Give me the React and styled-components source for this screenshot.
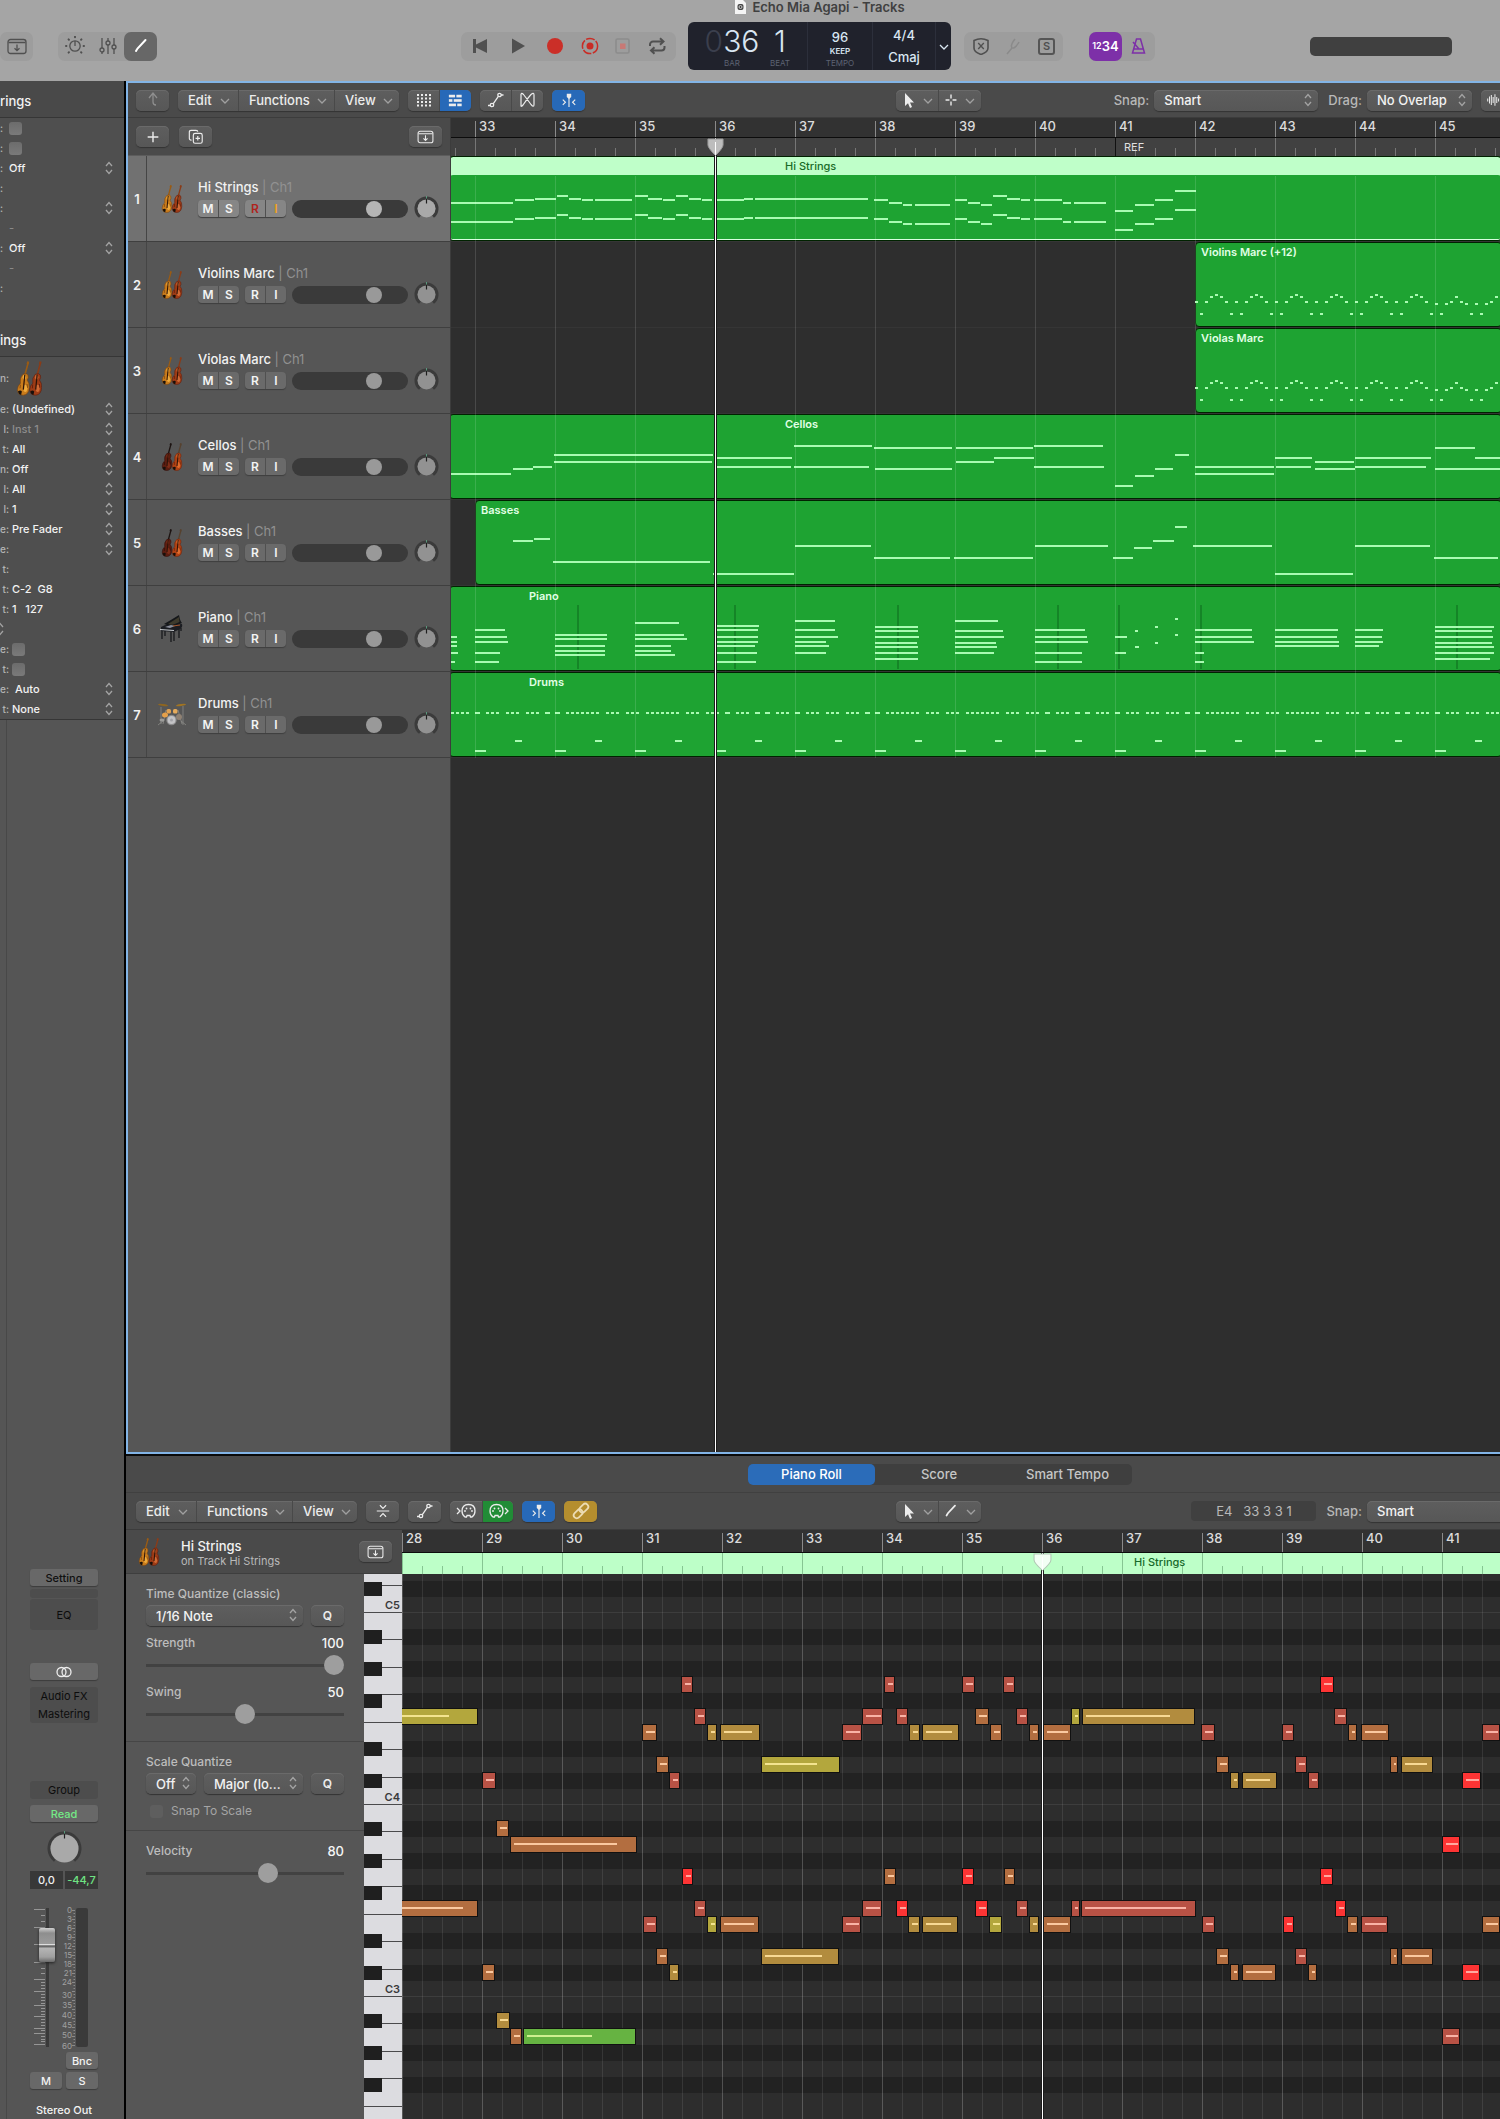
import React from 'react';
import styled, { createGlobalStyle, css } from 'styled-components';

const GlobalStyle = createGlobalStyle`
  * { box-sizing: border-box; }
  body {
    margin: 0;
    background: #4a4a4a;
    color: #f2f2f2;
    font-family: Inter, "Liberation Sans", sans-serif;
    font-size: 12px;
    line-height: 16px;
    overflow-x: hidden;
  }
  button, select, input { font: inherit; color: inherit; margin: 0; }
`;

/* ---------- data ---------- */

const BAR = 80;

const hiStringsLine = [
  [0, 62, 46], [64, 83, 43], [84, 105, 42], [106, 117, 39], [118, 130, 42], [131, 142, 43], [144, 181, 43],
  [184, 197, 39], [197, 211, 42], [212, 224, 43], [225, 237, 39], [238, 250, 42], [251, 261, 43],
  [265, 293, 43], [293, 302, 42], [304, 417, 42], [423, 437, 43], [438, 451, 46], [452, 461, 48],
  [464, 499, 48], [504, 516, 43], [517, 529, 46], [530, 541, 48], [542, 556, 39], [556, 569, 42],
  [570, 579, 43], [583, 611, 43], [612, 620, 46], [623, 655, 46], [664, 682, 54], [684, 703, 48],
  [704, 722, 43], [724, 745, 34],
];
const hiStrings = [...hiStringsLine, ...hiStringsLine.map(([a, b, y]) => [a, b, y + 19])];

const arpA = [59, 71, 59, 54, 52, 54, 59, 71];
const arpB = [61, 71, 61, 59, 54, 59, 61, 71];
const arpeggio = Array.from({ length: 61 }, (_, k) => {
  const x = 744 + k * 5;
  const seq = k < 48 ? arpA : arpB;
  return [x, x + 3, seq[k % 8]];
});

const cellos = [
  [0, 60, 59], [62, 82, 54], [82, 101, 52], [103, 262, 40], [103, 261, 47], [264, 341, 43], [264, 340, 52],
  [343, 421, 31], [343, 418, 52], [423, 501, 33], [424, 501, 54], [505, 582, 33], [505, 543, 47],
  [543, 583, 43], [583, 652, 31], [583, 653, 52], [664, 682, 71], [684, 703, 61], [704, 722, 54],
  [724, 738, 40], [744, 823, 52], [744, 823, 59], [824, 861, 43], [825, 860, 52], [864, 903, 47],
  [864, 904, 54], [904, 980, 43], [904, 975, 52], [984, 1024, 33], [984, 1049, 54], [1024, 1049, 43],
];

const basses = [
  [62, 82, 40], [83, 99, 38], [102, 259, 61], [262, 343, 73], [344, 420, 45], [423, 499, 57], [503, 582, 57],
  [584, 657, 45], [662, 682, 57], [683, 701, 47], [702, 723, 40], [724, 736, 26], [742, 821, 45],
  [824, 902, 73], [904, 979, 45], [983, 1047, 57],
];

const pianoChords = [
  [0, [[6, 50], [6, 55], [6, 59], [7, 66], [4, 75]]],
  [24, [[30, 43], [32, 50], [33, 55], [25, 66], [24, 75]]],
  [104, [[52, 48], [52, 52], [50, 59], [50, 64], [50, 68]]],
  [184, [[44, 36], [49, 48], [52, 52], [36, 59], [36, 64], [40, 68]]],
  [265, [[43, 39], [42, 43], [42, 50], [42, 55], [39, 59], [41, 66], [40, 75]]],
  [344, [[40, 34], [40, 43], [43, 50], [31, 55], [34, 59], [31, 66]]],
  [424, [[43, 40], [43, 44], [44, 50], [42, 56], [43, 60], [43, 66], [43, 72]]],
  [504, [[43, 34], [48, 44], [49, 50], [41, 56], [42, 60], [39, 66]]],
  [584, [[50, 43], [52, 50], [53, 55], [47, 66], [47, 75]]],
  [664, [[12, 50], [11, 66]]],
  [684, [[3, 44], [4, 60]]],
  [704, [[3, 40], [3, 56]]],
  [724, [[3, 32], [3, 48]]],
  [744, [[57, 43], [57, 50], [59, 55], [9, 66], [9, 75]]],
  [824, [[63, 43], [62, 50], [64, 55], [64, 59]]],
  [904, [[28, 43], [27, 50], [28, 55], [24, 59]]],
  [984, [[59, 40], [57, 44], [58, 50], [57, 56], [59, 60], [59, 66], [55, 72]]],
];
const piano = pianoChords.flatMap(([x, tones]) => tones.map(([w, y]) => [x, x + w, y]));
const pianoPedal = [126, 283, 446, 606, 667, 749, 1005];

const hatRuns = [
  [1, 3], [5, 5], [7, 9], [11, 13], [15, 17], [19, 19], [21, 21], [23, 29], [31, 33], [35, 37], [39, 45],
  [47, 49], [51, 53], [55, 55], [57, 59], [61, 61], [63, 63],
];
const drums = [[0, 3, 40]];
for (let cycle = 0; cycle < 4; cycle += 1) {
  hatRuns.forEach(([from, to]) => {
    for (let k = from; k <= to; k += 1) {
      const x = (cycle * 64 + k) * 5;
      drums.push(from === to ? [x - 1, x + 4, 40] : [x, x + 3, 40]);
    }
  });
}
for (let b = 0; b < 13; b += 1) {
  drums.push([24 + b * BAR, 35 + b * BAR, 78]);
  drums.push([64 + b * BAR, 71 + b * BAR, 68]);
}

const tracks = [
  { name: 'Hi Strings', icon: 'violin', selected: true, notes: hiStrings, start: -2, label: 334 },
  { name: 'Violins Marc', region: 'Violins Marc (+12)', icon: 'violin', notes: arpeggio, start: 744, label: 750 },
  { name: 'Violas Marc', icon: 'violin', notes: arpeggio, start: 744, label: 750 },
  { name: 'Cellos', icon: 'cello', notes: cellos, start: -2, label: 334 },
  { name: 'Basses', icon: 'cello', notes: basses, start: 24, label: 30 },
  { name: 'Piano', icon: 'piano', notes: piano, pedal: pianoPedal, start: -2, label: 78 },
  { name: 'Drums', icon: 'drums', notes: drums, start: -2, label: 78 },
];

const tones = {
  g: { bg: '#66b342', line: '#cdf08f', v: 0.59 },
  y: { bg: '#b3a73d', line: '#f3e48f', v: 0.69 },
  a: { bg: '#b28c3e', line: '#f8d993', v: 0.76 },
  o: { bg: '#b36e40', line: '#fbc9a0', v: 0.83 },
  r: { bg: '#b85245', line: '#f9b3a6', v: 0.9 },
  R: { bg: '#fd3434', line: '#ffa9a0', v: 1 },
};

const rollNotes = {
  67: [[279, 12, 'r'], [482, 11, 'r'], [560, 13, 'r'], [601, 12, 'r'], [918, 14, 'R']],
  65: [[-24, 100, 'y'], [292, 12, 'r'], [460, 21, 'r'], [494, 12, 'r'], [573, 14, 'o'], [614, 12, 'r'], [669, 9, 'y'], [680, 113, 'a'], [932, 13, 'r']],
  64: [[240, 15, 'o'], [305, 10, 'a'], [318, 40, 'a'], [440, 20, 'r'], [507, 11, 'a'], [520, 37, 'a'], [588, 12, 'o'], [627, 10, 'o'], [641, 28, 'o'], [799, 14, 'r'], [880, 12, 'r'], [946, 9, 'o'], [959, 28, 'o'], [1080, 18, 'r']],
  62: [[254, 13, 'o'], [359, 79, 'y'], [814, 13, 'o'], [893, 12, 'r'], [988, 8, 'o'], [999, 32, 'a']],
  61: [[80, 14, 'r'], [267, 11, 'r'], [828, 9, 'a'], [840, 35, 'a'], [906, 11, 'r'], [1060, 19, 'R']],
  58: [[94, 13, 'o']],
  57: [[108, 127, 'o'], [1040, 18, 'R']],
  55: [[280, 11, 'R'], [482, 12, 'o'], [560, 12, 'R'], [602, 11, 'o'], [918, 13, 'R']],
  53: [[-24, 100, 'o'], [292, 12, 'r'], [460, 20, 'r'], [494, 12, 'R'], [573, 13, 'R'], [614, 12, 'r'], [669, 9, 'r'], [679, 115, 'r'], [933, 11, 'R']],
  52: [[241, 14, 'r'], [305, 10, 'y'], [318, 39, 'o'], [440, 19, 'r'], [506, 12, 'a'], [520, 36, 'a'], [587, 13, 'y'], [627, 10, 'a'], [641, 28, 'o'], [800, 13, 'r'], [881, 11, 'R'], [945, 11, 'o'], [959, 27, 'r'], [1080, 18, 'o']],
  50: [[254, 12, 'o'], [359, 78, 'a'], [814, 13, 'o'], [893, 12, 'r'], [988, 8, 'o'], [999, 32, 'o']],
  49: [[80, 13, 'o'], [267, 10, 'a'], [828, 9, 'o'], [840, 34, 'o'], [906, 9, 'o'], [1060, 18, 'R']],
  46: [[94, 14, 'a']],
  45: [[108, 12, 'o'], [121, 113, 'g'], [1040, 18, 'r']],
};

/* ---------- icons ---------- */

const glyphs = {
  chevron: <path d="M2 5l4 4 4-4" />,
  updown: <path d="M3 5l3-3.5L9 5M3 9l3 3.5L9 9" />,
  inbox: <><rect x="1" y="1.5" width="18" height="14" rx="2.5" /><path d="M1.5 4.5h17M10 6.5v6M7.5 10.2L10 12.7l2.5-2.5" /></>,
  brightness: <><circle cx="10" cy="10" r="5.2" /><path d="M10 5v5" /><path strokeWidth="2" strokeLinecap="round" d="M10 .8v.4M3.6 3.4l.3.3M16.4 3.4l-.3.3M1 10h.4M19 10h-.4M3.6 16.6l.3-.3M16.4 16.6l-.3-.3" /></>,
  mixer: <><path d="M3 2v10M3 16v2M9 2v3M9 9v9M15 2v7M15 13v5" /><circle cx="3" cy="14" r="2" /><circle cx="9" cy="7" r="2" /><circle cx="15" cy="11" r="2" /></>,
  pencil: <path strokeWidth="2" strokeLinecap="round" d="M5 15l1.5-2.5L14.5 4" />,
  toStart: <path fill="currentColor" stroke="none" d="M2 2h3v5.6L16 2v14L5 10.400V16H2z" />,
  play: <path fill="currentColor" stroke="none" d="M3 1.500L16 9 3 16.500z" />,
  record: <circle cx="9" cy="9" r="8" fill="#cb2f28" stroke="none" />,
  capture: <><circle cx="9" cy="9" r="7.600" stroke="#c92c25" strokeWidth="1.500" strokeDasharray="9 1.500" /><circle cx="9" cy="9" r="3.500" fill="#c92c25" stroke="none" /></>,
  replace: <><rect x="2" y="2" width="13" height="14" rx="1.500" stroke="#8c8c8c" strokeWidth="1.600" /><rect x="6" y="6.500" width="5.500" height="5.500" fill="#c87975" stroke="none" /></>,
  cycle: <path strokeWidth="2" d="M2 9V7.500a3 3 0 013-3h10M12 1.200l3.500 3.300L12 7.800M16.500 9v1.500a3 3 0 01-3 3H3.500M6.500 10.200L3 13.500l3.500 3.300" />,
  shield: <><path d="M2 3.500Q9 0 16 3.500V11q0 4-7 6.500Q2 15 2 11z" strokeWidth="1.600" /><path d="M6.200 6l5.600 6M11.800 6l-5.600 6" /></>,
  fork: <path stroke="#8a8a8a" d="M2 17l5-6Q5 8 10 2M7 11q3 1 7-6" strokeWidth="1.500" />,
  metronome: <><path stroke="#7d30a8" strokeWidth="1.500" d="M6.500 2h4l4 14H2.500z M4 12h9M9 12L3 5" /></>,
  up: <path d="M5 7l4-5 4 5M9 2v9q0 3 3 3" />,
  grid: <g fill="currentColor" stroke="none">{[0, 1, 2, 3].map((r) => [0, 1, 2, 3].map((c) => <rect key={`${r}${c}`} x={1 + c * 4} y={3 + r * 3.5} width="2" height="2" />))}</g>,
  list: <g fill="currentColor" stroke="none"><rect x="1" y="2" width="7" height="3" /><rect x="9.500" y="2" width="6" height="3" /><rect x="1" y="7" width="4" height="3" /><rect x="6.500" y="7" width="9" height="3" /><rect x="1" y="12" width="8" height="3" /><rect x="10.500" y="12" width="5" height="3" /></g>,
  automation: <><path d="M1 14.500h2.500M6 13.200l5.500-8M14 4h2.500" /><circle cx="5" cy="14" r="1.700" /><circle cx="12.500" cy="4" r="1.700" /></>,
  flex: <path d="M2 3v12Q2 16 4 14Q8 8 12 3.500Q15 1 15 4v9.500Q15 17 12 13.500Q8 8 4.500 3.500Q2 1 2 4" strokeWidth="1.200" />,
  catchPlayhead: <><path fill="currentColor" d="M6.500 2h5v3.500L9 8 6.500 5.500z" stroke="none" /><path d="M9 6v11M2 8.500l3 3-3 3M16 8.500l-3 3 3 3" /></>,
  collapse: <path d="M2 9h14M5.500 2.500L9 6l3.500-3.500M5.500 15.500L9 12l3.500 3.500" />,
  midiIn: <><path d="M1 6l3 3-3 3" /><path d="M9 15q-3-2-3-6 0-6.500 6.500-6.500T19 9q0 4-3 6h-1.500l-.5-1.500h-3l-.5 1.500z" /><path strokeWidth="1.800" strokeLinecap="round" d="M9 9h0M10.500 6.500h0M14.500 6.500h0M16 9h0" /></>,
  midiOut: <><path d="M17 6l3 3-3 3" /><path d="M5 15q-3-2-3-6 0-6.500 6.500-6.500T15 9q0 4-3 6h-1.500l-.5-1.500H7L6.500 15z" /><path strokeWidth="1.800" strokeLinecap="round" d="M5 9h0M6.500 6.500h0M10.500 6.500h0M12 9h0" /></>,
  link: <g transform="rotate(-45 9 9)" strokeWidth="1.800" stroke="#ecdcb4"><rect x="0" y="6" width="10" height="6" rx="3" /><rect x="8" y="6" width="10" height="6" rx="3" /></g>,
  arrow: <path fill="currentColor" stroke="none" d="M5 1v13l3-2.700 2 4.700 2-.9-2-4.500h4z" />,
  cross: <path d="M9 2v5M9 11v5M2 9h5M11 9h5" strokeWidth="1.800" />,
  plus: <path d="M9 3v12M3 9h12" strokeWidth="1.600" />,
  duplicate: <><rect x="6" y="5" width="10" height="11" rx="2" /><path d="M4 12.500H3.500q-2 0-2-2V3.500q0-2 2-2H9q2 0 2 1.500M11 8v5M8.500 10.500h5" /></>,
  wave: <path d="M1 7v4M3.500 4v10M6 2v14M8.500 5v8M11 1v16M13.500 5v8M16 7v4" strokeWidth="1.400" />,
  stereo: <><circle cx="6.500" cy="7" r="4.500" /><circle cx="11.500" cy="7" r="4.500" /></>,
};

function Icon({ name, w = 18, h = 18, box }) {
  return (
    <svg width={w} height={h} viewBox={box || `0 0 ${w} ${h}`} fill="none" stroke="currentColor" strokeWidth="1.300" aria-hidden="true">
      {glyphs[name]}
    </svg>
  );
}

function Fiddle({ x, body, shine, edge, neck }) {
  return (
    <g transform={`translate(${x} 0)`}>
      <path d="M6 13L9 2" stroke={neck} strokeWidth="1.300" />
      <path d="M8.200 1l1.600.4-.6 2-1.600-.4z" fill={neck} />
      <path
        d="M4.800 11.500q3.200-1.200 4 .8.700 2-.7 4 2 2.400 1.700 6-.4 6-4.800 6.200Q.3 28.600.2 24q0-3 2.500-5.200Q1.800 14.500 4.800 11.500z"
        fill={body}
        stroke={edge}
        strokeWidth=".5"
      />
      <ellipse cx="5.800" cy="14" rx="1.400" ry="2" fill={shine} />
      <ellipse cx="6.600" cy="23" rx="1.600" ry="3" fill={shine} />
      <path d="M6.200 12L5 24" stroke="#2b1308" />
      <path d="M2.600 20l-.3 3M8 19.500l.4 3" stroke={edge} strokeWidth=".7" />
      <path d="M.6 25.500q2-1.500 3.200 0l-.6 2.800Q1.200 28 .6 25.500z" fill="#17100b" />
    </g>
  );
}

function Instrument({ kind, large }) {
  const [w, h] = large ? [25, 37] : [30, 30];
  const box = large ? '0 0 20 30' : '-5 0 30 30';
  if (kind === 'piano') {
    return (
      <svg width={w} height={h} viewBox="0 0 30 30" aria-hidden="true">
        <path d="M7 10Q14 6 22 1q1 6 3 8l-9 4z" fill="#15171a" />
        <path d="M11 10l11-7 .5 5-7 3z" fill="#3d3a2c" />
        <path d="M4 13q5-3 9-2l12-1q1 3-2 5l-6 3-13-1z" fill="#1b1d22" />
        <path d="M8 13l6-2 4 1-5 2z" fill="#8b8f9c" />
        <path d="M16 12l7-1" stroke="#a3572c" />
        <path d="M3 15.500l14 1" stroke="#c4c8cc" strokeWidth="1.200" />
        <path d="M5 17v8M8 17v5M14 18v10M17 18v9M22 15v9M24 14v3" stroke="#17191c" strokeWidth="1.300" />
      </svg>
    );
  }
  if (kind === 'drums') {
    return (
      <svg width={w} height={h} viewBox="0 0 30 30" aria-hidden="true">
        <path d="M4 7v17M26 6v19M9 10l-3 14M21 10l4 14M1 25l5-4M29 25l-5-4" stroke="#8b8b88" strokeWidth=".8" />
        <ellipse cx="6" cy="5" rx="5" ry="1" fill="#8f6620" transform="rotate(8 6 5)" />
        <ellipse cx="24" cy="5" rx="5" ry="1" fill="#a07423" transform="rotate(-8 24 5)" />
        <rect x="9.500" y="9" width="4.500" height="4.500" rx="1.500" fill="#e0a050" />
        <rect x="16" y="9" width="4.500" height="4.500" rx="1.500" fill="#e6ab5c" />
        <ellipse cx="8" cy="15" rx="3" ry="2.500" fill="#e5a04a" />
        <ellipse cx="22" cy="17" rx="3" ry="3" fill="#8f8173" />
        <ellipse cx="5" cy="20" rx="2.500" ry="1.500" fill="#9c9c9a" />
        <circle cx="14.500" cy="20" r="5.200" fill="#8b8b8c" />
        <circle cx="14.500" cy="20" r="4" fill="#c3c3c6" />
        <circle cx="14.500" cy="20" r="1.500" fill="#a3a3a9" />
      </svg>
    );
  }
  const dark = kind === 'cello';
  return (
    <svg width={w} height={h} viewBox={box} aria-hidden="true">
      <Fiddle x={0} body={dark ? '#5c1d10' : '#c97c1c'} shine={dark ? '#7d2d18' : '#eeaa3c'} edge={dark ? '#2c0d08' : '#7d430d'} neck={dark ? '#1d1412' : '#9a5b14'} />
      <Fiddle x={10} body={dark ? '#b04214' : '#9e3c16'} shine={dark ? '#df6a2c' : '#cf6a35'} edge={dark ? '#6d210a' : '#5d1b0c'} neck={dark ? '#57422f' : '#8a3c18'} />
    </svg>
  );
}

/* ---------- shared controls ---------- */

const raised = css`
  background: linear-gradient(#5e5e5e, #575757);
  box-shadow: 0 1px 1px #333, inset 0 1px 0 #6a6a6a;
`;

const Group = styled.div`
  display: flex;
  flex: none;
  height: 21px;
  border-radius: 5px;
  margin-left: ${(p) => p.$gap || 0}px;
  overflow: hidden;
  ${raised}
`;

const tints = { blue: '#2769b8', green: '#218c36', gold: '#b58e2e' };

const ToolButton = styled.button`
  display: flex;
  align-items: center;
  justify-content: center;
  flex: none;
  gap: 6px;
  width: ${(p) => p.$w || 33}px;
  height: 21px;
  padding: 0;
  border: 0;
  color: ${(p) => (p.$dim ? '#8e8e8e' : '#ececec')};
  background: ${(p) => tints[p.$tint] || 'transparent'};
  & + & { border-left: 1px solid #494949; }
`;

const QButton = styled(ToolButton)`
  font-size: 12px;
  font-weight: 600;
`;

const Chevron = styled.span`
  display: flex;
  color: #a0a0a0;
`;

const MenuButton = styled(ToolButton)`
  justify-content: space-between;
  padding: 0 7px 0 10px;
  font-size: 13px;
  font-weight: 500;
`;

const SelectBox = styled.span`
  position: relative;
  display: flex;
  flex: ${(p) => (p.$w ? 'none' : '1')};
  width: ${(p) => (p.$w ? `${p.$w}px` : 'auto')};
  min-width: 0;
  height: 21px;
  border-radius: 5px;
  color: ${(p) => (p.$dim ? '#8c8c8c' : '#f2f2f2')};
  ${(p) => !p.$flat && raised}
  select {
    flex: 1;
    min-width: 0;
    appearance: none;
    border: 0;
    background: none;
    padding: 0 18px 0 ${(p) => (p.$flat ? 0 : 10)}px;
    font-size: ${(p) => (p.$flat ? 11 : 13)}px;
    font-weight: 500;
    text-overflow: ellipsis;
  }
`;

const SelectArrow = styled.span`
  position: absolute;
  right: ${(p) => (p.$flat ? 0 : 4)}px;
  top: 3px;
  display: flex;
  color: #a3a3a3;
  pointer-events: none;
`;

function Select({ label, value, w, flat, dim }) {
  return (
    <SelectBox $w={w} $flat={flat} $dim={dim}>
      <select aria-label={label} defaultValue={value}>
        <option>{value}</option>
      </select>
      <SelectArrow $flat={flat}><Icon name="updown" w={12} h={14} /></SelectArrow>
    </SelectBox>
  );
}

const Check = styled.input`
  appearance: none;
  flex: none;
  width: 13px;
  height: 13px;
  border-radius: 3px;
  background: ${(p) => (p.$faint ? '#5e5e5e' : 'linear-gradient(#6c6c6c, #7a7a7a)')};
`;

function Menus() {
  return (
    <Group $gap={9}>
      <MenuButton $w={60}>Edit<Chevron><Icon name="chevron" w={12} h={12} /></Chevron></MenuButton>
      <MenuButton $w={96}>Functions<Chevron><Icon name="chevron" w={12} h={12} /></Chevron></MenuButton>
      <MenuButton $w={65}>View<Chevron><Icon name="chevron" w={12} h={12} /></Chevron></MenuButton>
    </Group>
  );
}

/* ---------- window top ---------- */

const Page = styled.div`
  display: flex;
  flex-direction: column;
  min-height: 100vh;
  overflow: hidden;
`;

const TopBar = styled.header`
  height: 81px;
  background: #a5a5a5;
  color: #4a4a4a;
`;

const TitleRow = styled.div`
  display: flex;
  justify-content: center;
  align-items: center;
  gap: 6px;
  height: 14px;
  padding-left: 140px;
  color: #404040;
  font-size: 13px;
  font-weight: 600;
`;

const ControlRow = styled.div`
  display: flex;
  align-items: center;
  height: 64px;
  padding-right: 48px;
`;

const Cluster = styled.div`
  display: flex;
  align-items: center;
  flex: none;
  height: 29px;
  margin-left: ${(p) => p.$gap || 0}px;
  padding: 0 ${(p) => p.$pad || 0}px;
  border-radius: 7px;
  background: #9d9d9d;
`;

const ClusterButton = styled.button`
  display: flex;
  align-items: center;
  justify-content: center;
  width: ${(p) => p.$w || 33}px;
  height: 29px;
  padding: 0;
  border: 0;
  border-radius: 7px;
  font-size: ${(p) => (p.$count ? 13 : 11)}px;
  font-weight: 600;
  color: ${(p) => (p.$bg ? '#fff' : '#505050')};
  background: ${(p) => p.$bg || 'transparent'};
`;

const SoloMark = styled.span`
  display: flex;
  align-items: center;
  justify-content: center;
  width: 17px;
  height: 17px;
  border: 2px solid #555;
  border-radius: 3px;
`;

const Lcd = styled.div`
  display: flex;
  flex: none;
  width: 263px;
  height: 48px;
  margin-left: 12px;
  border-radius: 6px;
  background: #20222c;
  color: #d9e6f2;
`;

const LcdCell = styled.div`
  display: flex;
  flex-direction: column;
  align-items: center;
  justify-content: ${(p) => (p.$spread ? 'space-evenly' : 'flex-end')};
  width: ${(p) => p.$w}px;
  border-left: ${(p) => (p.$line ? '1px solid #2c2f3b' : '0')};
  padding: 0 ${(p) => p.$right || 0}px ${(p) => (p.$spread ? 0 : 1)}px ${(p) => p.$left || 0}px;
`;

const LcdDigits = styled.span`
  font-size: 30px;
  font-weight: 300;
  line-height: 32px;
  i { font-style: normal; color: #3b3f4d; }
`;

const LcdValue = styled.span`
  font-size: 13px;
  line-height: 16px;
  font-weight: 500;
`;

const LcdKeep = styled.span`
  font-size: 8px;
  line-height: 12px;
  font-weight: 600;
`;

const LcdCaption = styled.span`
  font-size: 8px;
  line-height: 12px;
  color: #5d6273;
`;

const MasterSlot = styled.div`
  flex: none;
  width: 142px;
  height: 19px;
  margin-left: auto;
  border-radius: 5px;
  background: #404040;
`;

const Count = styled.small`
  font-size: 9px;
`;

function WindowTop() {
  return (
    <TopBar>
      <TitleRow>
        <svg width="11" height="14" viewBox="0 0 11 14" aria-hidden="true">
          <path d="M0 0h8l3 3v11H0z" fill="#f4f4f4" />
          <rect x="2.500" y="4" width="6" height="6" rx="2" fill="#444" />
          <circle cx="5.500" cy="7" r="1.500" fill="none" stroke="#ccc" />
        </svg>
        Echo Mia Agapi - Tracks
      </TitleRow>
      <ControlRow>
        <Cluster><ClusterButton aria-label="Library"><Icon name="inbox" w={20} h={17} /></ClusterButton></Cluster>
        <Cluster $gap={25}>
          <ClusterButton aria-label="Smart controls"><Icon name="brightness" w={20} h={20} /></ClusterButton>
          <ClusterButton aria-label="Mixer"><Icon name="mixer" w={18} h={20} /></ClusterButton>
          <ClusterButton aria-label="Editors" $bg="#676767"><Icon name="pencil" w={20} h={20} /></ClusterButton>
        </Cluster>
        <Cluster $gap={304} $pad={1}>
          <ClusterButton $w={36} aria-label="Go to beginning"><Icon name="toStart" /></ClusterButton>
          <ClusterButton $w={39} aria-label="Play"><Icon name="play" /></ClusterButton>
          <ClusterButton $w={35} aria-label="Record"><Icon name="record" /></ClusterButton>
          <ClusterButton $w={35} aria-label="Capture recording"><Icon name="capture" /></ClusterButton>
          <ClusterButton $w={31} aria-label="Replace"><Icon name="replace" /></ClusterButton>
          <ClusterButton $w={37} aria-label="Cycle"><Icon name="cycle" /></ClusterButton>
        </Cluster>
        <Lcd>
          <LcdCell $w={78} $left={10}><LcdDigits><i>0</i>36</LcdDigits><LcdCaption>BAR</LcdCaption></LcdCell>
          <LcdCell $w={41} $right={13}><LcdDigits>1</LcdDigits><LcdCaption>BEAT</LcdCaption></LcdCell>
          <LcdCell $w={65} $line><LcdValue>96</LcdValue><LcdKeep>KEEP</LcdKeep><LcdCaption>TEMPO</LcdCaption></LcdCell>
          <LcdCell $w={63} $line $spread><LcdValue>4/4</LcdValue><LcdValue>Cmaj</LcdValue></LcdCell>
          <LcdCell $w={16} $line $spread><Icon name="chevron" w={12} h={12} /></LcdCell>
        </Lcd>
        <Cluster $gap={13}>
          <ClusterButton aria-label="Replace mode"><Icon name="shield" /></ClusterButton>
          <ClusterButton aria-label="Tuner"><Icon name="fork" /></ClusterButton>
          <ClusterButton aria-label="Solo"><SoloMark>S</SoloMark></ClusterButton>
        </Cluster>
        <Cluster $gap={26}>
          <ClusterButton $bg="#7d30a8" $count aria-label="Count in"><Count>12</Count>34</ClusterButton>
          <ClusterButton aria-label="Metronome"><Icon name="metronome" /></ClusterButton>
        </Cluster>
        <MasterSlot />
      </ControlRow>
    </TopBar>
  );
}

/* ---------- inspector ---------- */

const Body = styled.div`
  display: grid;
  grid-template-columns: 126px minmax(0, 1fr);
  flex: 1;
`;

const Inspector = styled.aside`
  display: flex;
  flex-direction: column;
  overflow: hidden;
  border-right: 2px solid #000;
  background: #555;
`;

const PanelTitle = styled.h2`
  display: flex;
  align-items: center;
  height: 37px;
  margin: 0;
  padding-top: 3px;
  border-bottom: 1px solid #363636;
  background: #494949;
  font-size: 13px;
  font-weight: 500;
`;

const Panel = styled.div`
  padding-bottom: ${(p) => p.$end || 0}px;
  background: #4f4f4f;
  ${(p) => p.$last && 'border-bottom: 1px solid #363636;'}
`;

const Field = styled.div`
  display: flex;
  align-items: center;
  gap: ${(p) => p.$gap || 3}px;
  height: ${(p) => p.$h || 20}px;
  padding-right: 9px;
  font-size: 11px;
  font-weight: 500;
`;

const FieldLabel = styled.span`
  display: flex;
  flex: none;
  justify-content: flex-end;
  width: ${(p) => p.$w}px;
  color: #b4b4b4;
  font-size: 10px;
`;

const DisclosureArrows = styled.span`
  display: flex;
  color: #a3a3a3;
`;

const Dash = styled.span`
  color: #8a8a8a;
`;

const regionFields = [
  { kind: 'check' }, { kind: 'check' }, { kind: 'select', value: 'Off' }, { kind: 'blank' },
  { kind: 'select', value: '' }, { kind: 'dash' }, { kind: 'select', value: 'Off' }, { kind: 'dash' }, { kind: 'blank' },
];

const trackFields = [
  ['e:', 'select', '(Undefined)'], ['l:', 'dim', 'Inst 1'], ['t:', 'select', 'All'], ['n:', 'select', 'Off'],
  ['l:', 'select', 'All'], ['l:', 'select', '1'], ['e:', 'select', 'Pre Fader'], ['e:', 'select', ''], ['t:', 'text', ''],
  ['t:', 'text', 'C-2\u00a0\u00a0G8'], ['t:', 'text', '1\u00a0\u00a0\u00a0127'], ['', 'disclosure', ''], ['e:', 'check', ''],
  ['t:', 'check', ''], ['e:', 'select', '\u00a0Auto'], ['t:', 'select', 'None'],
];

function FieldControl({ kind, value, label }) {
  if (kind === 'check') return <Check type="checkbox" aria-label={label} />;
  if (kind === 'select') return <Select flat label={label} value={value} />;
  if (kind === 'dim') return <Select flat dim label={label} value={value} />;
  if (kind === 'dash') return <Dash>-</Dash>;
  return <span>{value}</span>;
}

/* ---------- channel strip ---------- */

const Strip = styled.section`
  display: flex;
  flex: 1;
  flex-direction: column;
  justify-content: flex-end;
  margin-left: 6px;
  padding: 0 26px 1px 23px;
  border-left: 1px solid #484848;
  font-size: 11px;
`;

const StripRow = styled.div`
  display: flex;
  justify-content: ${(p) => p.$align || 'space-between'};
  margin-top: ${(p) => p.$gap}px;
`;

const StripButton = styled.button`
  display: flex;
  align-items: center;
  justify-content: center;
  width: ${(p) => (p.$half ? '32px' : '100%')};
  height: 17px;
  padding: 0;
  border: 0;
  border-radius: 3px;
  background: #686868;
  box-shadow: 0 1px 1px #3c3c3c;
  color: ${(p) => p.$color || '#101010'};
  font-size: 11px;
  font-weight: 500;
`;

const Slot = styled.div`
  display: flex;
  flex-direction: column;
  align-items: center;
  justify-content: center;
  height: ${(p) => p.$h}px;
  margin-top: ${(p) => p.$gap}px;
  border-radius: 3px;
  background: #4d4d4d;
  color: #0c0c0c;
  line-height: 18px;
`;

const Readout = styled.output`
  width: 33px;
  height: 18px;
  background: #383838;
  color: ${(p) => p.$color || '#f2f2f2'};
  font-size: 11px;
  font-weight: 500;
  line-height: 18px;
  text-align: center;
`;

const FaderArea = styled.div`
  display: flex;
  height: 139px;
  margin-top: 19px;
  padding-left: 4px;
`;

const Fader = styled.input`
  appearance: none;
  writing-mode: vertical-lr;
  direction: rtl;
  width: 16px;
  height: 139px;
  margin-left: -6px;
  background: linear-gradient(#3a3a3a, #3a3a3a) 7px 0 / 3px 139px no-repeat;
  &::-webkit-slider-thumb {
    appearance: none;
    width: 16px;
    height: 34px;
    border-radius: 2px;
    background: linear-gradient(#d0d0d0, #8e8e8e 15%, #9b9b9b 46%, #efefef 48%, #555 53%, #b5b5b5 60%, #a0a0a0 85%, #6a6a6a);
    box-shadow: 0 1px 3px #222;
  }
`;

const Scale = styled.div`
  display: grid;
  grid-template-rows: repeat(9, 9px) 13px repeat(4, 10px) 11px;
  align-items: end;
  justify-items: end;
  width: 17px;
  margin-top: -2px;
  color: #a0a0a0;
  font-size: 8px;
  line-height: 9px;
`;

const Meter = styled.div`
  width: 12px;
  margin-left: 1px;
  border-radius: 2px;
  background: #3a3a3a;
`;

const StripName = styled.div`
  margin: 13px -10px 0;
  text-align: center;
  font-weight: 500;
`;

const KnobSvg = styled.svg`
  flex: none;
  display: block;
`;

function Knob({ size = 25, bright }) {
  const c = size / 2;
  const r = c - 2;
  const a = r * 0.62;
  const b = r * 0.78;
  return (
    <KnobSvg width={size} height={size} viewBox={`0 0 ${size} ${size}`} aria-hidden="true">
      <path d={`M${c - a} ${c + b}A${r} ${r} 0 1 1 ${c + a} ${c + b}`} fill="none" stroke="#3b3b3b" strokeWidth="3" />
      <circle cx={c} cy={c} r={r - 1.5} fill={bright ? '#a9a9a9' : '#929292'} />
      <path d={`M${c} 3V7.500`} stroke="#1f1f1f" strokeWidth="1.200" />
      <path d={`M${c} 0V2.500`} stroke="#5fae8c" strokeWidth=".8" />
    </KnobSvg>
  );
}

const scaleMarks = [0, 3, 6, 9, 12, 15, 18, 21, 24, 30, 35, 40, 45, 50, 60];
const longTicks = [1, 19, 36, 54, 71, 83, 97, 108, 120, 125, 136];
const shortTicks = [7, 13, 60, 65, 74, 77, 80, 86, 89, 92, 95, 100, 103, 106, 111, 114, 117, 122, 128, 131, 133];

function ChannelStrip() {
  return (
    <Strip aria-label="Stereo output">
      <StripButton>Setting</StripButton>
      <Slot $h={9} $gap={3} />
      <Slot $h={31} $gap={1}>EQ</Slot>
      <StripRow $gap={33}><StripButton $color="#eee" aria-label="Stereo"><Icon name="stereo" w={18} h={14} /></StripButton></StripRow>
      <Slot $h={36} $gap={7}><span>Audio FX</span><span>Mastering</span></Slot>
      <Slot $h={18} $gap={58}>Group</Slot>
      <StripRow $gap={6}><StripButton $color="#74ea86">Read</StripButton></StripRow>
      <StripRow $gap={9} $align="center"><Knob size={35} bright /></StripRow>
      <StripRow $gap={5}><Readout>0,0</Readout><Readout $color="#6fe383">-44,7</Readout></StripRow>
      <FaderArea>
        <svg width="11" height="139" viewBox="0 0 11 139" stroke="#969696" aria-hidden="true">
          {longTicks.map((y) => <path key={y} d={`M0 ${y + 0.5}h11`} />)}
          {shortTicks.map((y) => <path key={y} d={`M7 ${y + 0.5}h4`} />)}
        </svg>
        <Fader type="range" min="0" max="100" defaultValue="81" aria-label="Volume" />
        <Scale>{scaleMarks.map((m) => <span key={m}>{m}</span>)}</Scale>
        <svg width="3" height="139" viewBox="0 0 3 139" stroke="#8a8a8a" aria-hidden="true">
          {Array.from({ length: 46 }, (_, k) => <path key={k} d={`M${k % 3 ? 1.5 : 0} ${2.5 + k * 3}h3`} />)}
        </svg>
        <Meter />
      </FaderArea>
      <StripRow $gap={5} $align="flex-end"><StripButton $half $color="#f2f2f2">Bnc</StripButton></StripRow>
      <StripRow $gap={3}><StripButton $half $color="#f2f2f2">M</StripButton><StripButton $half $color="#f2f2f2">S</StripButton></StripRow>
      <StripName>Stereo Out</StripName>
    </Strip>
  );
}

function InspectorColumn() {
  return (
    <Inspector>
      <PanelTitle>rings</PanelTitle>
      <Panel $end={22}>
        {regionFields.map((f, i) => (
          <Field key={i} $gap={6}>
            <FieldLabel $w={3}>{f.kind === 'dash' ? '' : ':'}</FieldLabel>
            <FieldControl kind={f.kind} value={f.value} label={`Region setting ${i + 1}`} />
          </Field>
        ))}
      </Panel>
      <PanelTitle>ings</PanelTitle>
      <Panel $last>
        <Field $h={42} $gap={8}><FieldLabel $w={9}>n:</FieldLabel><Instrument kind="violin" large /></Field>
        {trackFields.map(([label, kind, value], i) => (
          <Field key={i}>
            {kind === 'disclosure'
              ? <DisclosureArrows><Icon name="updown" w={4} h={14} box="6 0 4 14" /></DisclosureArrows>
              : <FieldLabel $w={9}>{label}</FieldLabel>}
            <FieldControl kind={kind} value={value} label={`Track setting ${i + 1}`} />
          </Field>
        ))}
      </Panel>
      <ChannelStrip />
    </Inspector>
  );
}

/* ---------- tracks area ---------- */

const Main = styled.main`
  display: flex;
  flex-direction: column;
  min-width: 0;
`;

const TracksArea = styled.section`
  display: flex;
  flex: 1;
  flex-direction: column;
  border: 2px solid #82b4e6;
  border-right: 0;
  background: #2e2e2e;
`;

const Toolbar = styled.div`
  display: flex;
  align-items: center;
  height: ${(p) => p.$h}px;
  padding-left: ${(p) => p.$pad}px;
  overflow: hidden;
  border-bottom: 1px solid #3c3c3c;
  background: #4a4a4a;
`;

const Spacer = styled.div`
  flex: none;
  width: ${(p) => p.$w}px;
`;

const Trailing = styled.div`
  display: flex;
  align-items: center;
  flex: none;
  gap: 5px;
  margin-left: auto;
  margin-right: ${(p) => -p.$bleed || 0}px;
`;

const ToolLabel = styled.span`
  margin-left: ${(p) => p.$gap || 0}px;
  color: #b8b8b8;
  font-size: 13px;
  font-weight: 500;
`;

const EndButton = styled(ToolButton)`
  justify-content: flex-start;
  width: 19px;
  margin-left: 4px;
  padding-left: 6px;
  border-radius: 5px 0 0 5px;
  ${raised}
`;

const TracksBody = styled.div`
  display: grid;
  grid-template-columns: 323px minmax(0, 1fr);
  flex: 1;
`;

const TrackList = styled.div`
  border-right: 1px solid #3c3c3c;
  background: #565656;
`;

const TrackListHead = styled.div`
  display: flex;
  align-items: center;
  gap: 10px;
  height: 38px;
  padding: 0 8px;
  border-bottom: 1px solid #5c5c5c;
  background: #4a4a4a;
  & > :last-child { margin-left: auto; }
`;

const TrackRow = styled.div`
  display: grid;
  grid-template-columns: 19px 47px minmax(0, 1fr);
  height: 86px;
  border-bottom: 1px solid #3f3f3f;
  background: ${(p) => (p.$selected ? '#717171' : '#565656')};
`;

const TrackNumber = styled.div`
  display: flex;
  align-items: center;
  justify-content: center;
  border-right: 1px solid #454545;
  font-size: 13px;
  font-weight: 600;
`;

const TrackIcon = styled.div`
  display: flex;
  align-items: center;
  justify-content: center;
  padding-left: 3px;
`;

const TrackInfo = styled.div`
  padding: 22px 8px 0 4px;
`;

const TrackName = styled.div`
  height: 18px;
  font-size: 13px;
  line-height: 18px;
  font-weight: 500;
`;

const Channel = styled.span`
  color: #919191;
  font-weight: 400;
`;

const TrackControls = styled.div`
  display: flex;
  align-items: center;
  gap: 6px;
  height: 25px;
`;

const Pair = styled.div`
  display: flex;
  overflow: hidden;
  border-radius: 4px;
  background: ${(p) => (p.$lit ? '#868686' : '#6a6a6a')};
  box-shadow: 0 1px 1px #3f3f3f;
`;

const PairButton = styled.button`
  width: 20px;
  height: 17px;
  padding: 0;
  border: 0;
  background: none;
  color: ${(p) => p.$color || '#f4f4f4'};
  font-size: 12px;
  line-height: 17px;
  font-weight: 600;
  & + & { width: 21px; border-left: 1px solid #505050; }
`;

const TrackVolume = styled.input`
  appearance: none;
  flex: none;
  width: 116px;
  height: 18px;
  border-radius: 9px;
  background: #3a3a3a;
  &::-webkit-slider-thumb {
    appearance: none;
    width: 16px;
    height: 16px;
    border-radius: 50%;
    background: ${(p) => (p.$bright ? '#b5b5b5' : '#999')};
  }
`;

const Timeline = styled.div`
  position: relative;
  overflow: hidden;
`;

const barLines = (color, step = BAR) => css`
  background-image: linear-gradient(90deg, ${color} 1px, transparent 1px);
  background-size: ${step}px 100%;
`;

const Ruler = styled.div`
  display: flex;
  height: ${(p) => p.$h}px;
  padding-left: ${(p) => p.$offset}px;
  border-bottom: 1px solid #0c0c0c;
  background: #323232;
  overflow: hidden;
`;

const RulerBar = styled.span`
  flex: none;
  width: 80px;
  height: 100%;
  margin-top: 3px;
  padding-left: 3px;
  border-left: 1px solid #8a8a8a;
  color: #dcdcdc;
  font-size: 13px;
  line-height: 11px;
  font-weight: 500;
`;

const TickRow = styled.div`
  display: flex;
  align-items: flex-end;
  height: ${(p) => p.$h}px;
  padding-left: ${(p) => p.$offset}px;
  background: ${(p) => p.$bg};
  overflow: hidden;
`;

const Tick = styled.i`
  flex: none;
  width: 20px;
  height: ${(p) => (p.$full ? '100%' : '8px')};
  border-left: 1px solid ${(p) => p.$color};
`;

const Marker = styled.span`
  position: absolute;
  left: 664px;
  top: 20px;
  height: 18px;
  padding-left: 8px;
  border-left: 1px solid #111;
  font-size: 11px;
  line-height: 18px;
  color: #e0e0e0;
`;

const Lanes = styled.div`
  position: relative;
`;

const Lane = styled.div`
  position: relative;
  height: 86px;
  border-bottom: 1px solid #353535;
`;

const Region = styled.div`
  position: absolute;
  left: ${(p) => p.$start}px;
  right: -2px;
  top: 0;
  height: 85px;
  border: 1px solid #020;
  border-radius: 4px;
  background: #1ea332;
  ${(p) => p.$selected && 'box-shadow: inset 0 18px 0 #bfffc9, inset 0 -1px 0 #d9ffdf;'}
`;

const RegionLabel = styled.span`
  position: absolute;
  left: ${(p) => p.$x}px;
  top: 2px;
  color: ${(p) => (p.$selected ? '#1a6b28' : '#e2ffe6')};
  font-size: 11px;
  font-weight: ${(p) => (p.$selected ? 500 : 600)};
`;

const NoteMap = styled.svg`
  position: absolute;
  left: 0;
  top: 0;
`;

const LaneLines = styled.div`
  position: absolute;
  inset: 20px 0 0 24px;
  pointer-events: none;
  ${barLines('rgba(255, 255, 255, 0.13)')}
`;

const Playhead = styled.div`
  position: absolute;
  left: ${(p) => p.$x}px;
  top: ${(p) => p.$top}px;
  bottom: 0;
  width: 3px;
  border: solid #1b1b1b;
  border-width: 0 1px 0 1px;
  background: #fff;
  svg { position: absolute; left: ${(p) => -p.$grip / 2}px; top: 0; }
`;

function Grip({ w, fill, stroke }) {
  return (
    <svg width={w} height="18" viewBox="0 0 18 18" preserveAspectRatio="none" aria-hidden="true">
      <path d="M1 1h16v6q0 3-8 10.500Q1 10 1 7z" fill={fill} stroke={stroke} />
      <path d="M9 4v13" stroke="#fff" />
    </svg>
  );
}

function TracksView() {
  return (
    <TracksArea aria-label="Tracks">
      <Toolbar $h={35} $pad={8}>
        <Group><ToolButton $dim aria-label="Up"><Icon name="up" /></ToolButton></Group>
        <Menus />
        <Group $gap={9}>
          <ToolButton $w={31} aria-label="Grid view"><Icon name="grid" w={16} h={18} /></ToolButton>
          <ToolButton $w={32} $tint="blue" aria-label="Region view"><Icon name="list" w={15} h={15} box="0 0 17 17" /></ToolButton>
        </Group>
        <Group $gap={9}>
          <ToolButton $w={31} aria-label="Automation"><Icon name="automation" w={18} h={18} /></ToolButton>
          <ToolButton $w={32} aria-label="Flex"><Icon name="flex" w={17} h={18} /></ToolButton>
        </Group>
        <Group $gap={9}><ToolButton $tint="blue" aria-label="Catch playhead"><Icon name="catchPlayhead" w={16} h={16} box="0 0 18 18" /></ToolButton></Group>
        <Spacer $w={311} />
        <Group>
          <ToolButton $w={42} aria-label="Pointer tool"><Icon name="arrow" w={16} h={16} /><Chevron><Icon name="chevron" w={12} h={12} /></Chevron></ToolButton>
          <ToolButton $w={43} aria-label="Marquee tool"><Icon name="cross" w={14} h={14} box="0 0 18 18" /><Chevron><Icon name="chevron" w={12} h={12} /></Chevron></ToolButton>
        </Group>
        <Trailing>
          <ToolLabel>Snap:</ToolLabel>
          <Select label="Snap" value="Smart" w={164} />
          <ToolLabel $gap={5}>Drag:</ToolLabel>
          <Select label="Drag" value="No Overlap" w={105} />
          <EndButton aria-label="Waveform zoom"><Icon name="wave" w={18} h={18} /></EndButton>
        </Trailing>
      </Toolbar>
      <TracksBody>
        <TrackList>
          <TrackListHead>
            <Group><ToolButton aria-label="Add track"><Icon name="plus" w={16} h={16} box="0 0 18 18" /></ToolButton></Group>
            <Group><ToolButton aria-label="Duplicate track"><Icon name="duplicate" w={16} h={16} box="0 0 18 18" /></ToolButton></Group>
            <Group><ToolButton aria-label="Track header settings"><Icon name="inbox" w={17} h={14} box="0 0 20 17" /></ToolButton></Group>
          </TrackListHead>
          {tracks.map((t, i) => (
            <TrackRow key={t.name} $selected={t.selected}>
              <TrackNumber>{i + 1}</TrackNumber>
              <TrackIcon><Instrument kind={t.icon} /></TrackIcon>
              <TrackInfo>
                <TrackName>{t.name} <Channel>| Ch1</Channel></TrackName>
                <TrackControls>
                  <Pair $lit={t.selected}><PairButton>M</PairButton><PairButton>S</PairButton></Pair>
                  <Pair $lit={t.selected}>
                    <PairButton $color={t.selected && '#b0231c'}>R</PairButton>
                    <PairButton $color={t.selected && '#f0a21c'}>I</PairButton>
                  </Pair>
                  <TrackVolume type="range" min="0" max="100" defaultValue="74" $bright={t.selected} aria-label={`${t.name} volume`} />
                  <Knob bright={t.selected} />
                </TrackControls>
              </TrackInfo>
            </TrackRow>
          ))}
        </TrackList>
        <Timeline>
          <Ruler $h={20} $offset={24}>
            {Array.from({ length: 13 }, (_, k) => <RulerBar key={k}>{33 + k}</RulerBar>)}
          </Ruler>
          <TickRow $h={18} $offset={4} $bg="#414141">
            {Array.from({ length: 53 }, (_, k) => <Tick key={k} $full={k % 4 === 1} $color="#767676" />)}
          </TickRow>
          <Lanes>
            {tracks.map((t) => (
              <Lane key={t.name}>
                <Region $start={t.start} $selected={t.selected} />
                <NoteMap width="1049" height="85" fill="#a9fbb2" aria-hidden="true">
                  {(t.pedal || []).map((x) => <rect key={x} x={x} y="19" width="2" height="64" fill="#158527" />)}
                  {t.notes.map(([a, b, y], k) => <rect key={k} x={a} y={y} width={b - a} height="2" />)}
                </NoteMap>
                <RegionLabel $x={t.label} $selected={t.selected}>{t.region || t.name}</RegionLabel>
              </Lane>
            ))}
            <LaneLines />
          </Lanes>
          <Marker>REF</Marker>
          <Playhead $x={263} $top={20} $grip={17}><Grip w={17} fill="#bdbdbd" stroke="#9a9a9a" /></Playhead>
        </Timeline>
      </TracksBody>
    </TracksArea>
  );
}

/* ---------- piano roll editor ---------- */

const Editor = styled.section`
  border-top: 2px solid #0a0a0a;
  background: #4a4a4a;
`;

const TabRow = styled.div`
  display: flex;
  align-items: center;
  height: 37px;
  padding-left: 622px;
  border-bottom: 1px solid #404040;
`;

const Tabs = styled.div`
  display: flex;
  border-radius: 5px;
  background: #3f3f3f;
`;

const Tab = styled.button`
  width: ${(p) => p.$w}px;
  height: 21px;
  padding: 0;
  border: 0;
  border-radius: 5px;
  background: ${(p) => (p.$active ? '#2b6cb9' : 'transparent')};
  color: ${(p) => (p.$active ? '#fff' : '#c6c6c6')};
  font-size: 13px;
  font-weight: 500;
`;

const Position = styled.output`
  width: 125px;
  height: 20px;
  margin-right: 5px;
  border-radius: 4px;
  background: #404040;
  color: #b8b8b8;
  font-size: 13px;
  line-height: 20px;
  text-align: center;
  white-space: pre;
`;

const EditorBody = styled.div`
  display: grid;
  grid-template-columns: 276px minmax(0, 1fr);
`;

const EditorSide = styled.div`
  display: flex;
  flex-direction: column;
`;

const RegionHead = styled.div`
  display: flex;
  align-items: center;
  height: 44px;
  padding: 0 10px 0 8px;
  border-bottom: 1px solid #3e3e3e;
  & > :last-child { margin-left: auto; }
`;

const RegionText = styled.div`
  padding: 4px 0 0 17px;
  font-size: 13px;
  font-weight: 500;
  line-height: 15px;
`;

const RegionSub = styled.div`
  color: #b9b9b9;
  font-size: 11px;
  font-weight: 400;
`;

const SideBody = styled.div`
  display: grid;
  grid-template-columns: 238px 38px;
  height: 545px;
  overflow: hidden;
`;

const Settings = styled.div`
  background: #565656;
`;

const Section = styled.div`
  display: flex;
  flex-direction: column;
  padding: ${(p) => p.$top}px 20px ${(p) => p.$bottom}px;
  border-bottom: ${(p) => (p.$last ? '0' : '1px solid #464646')};
`;

const SettingTitle = styled.div`
  height: 20px;
  color: #bdbdbd;
  font-size: 12px;
  font-weight: 500;
  line-height: 18px;
`;

const SettingRow = styled.div`
  display: flex;
  gap: 8px;
`;

const SliderField = styled.label`
  display: grid;
  grid-template-columns: 1fr auto;
  row-gap: 4px;
  margin-top: ${(p) => p.$gap || 0}px;
  color: #bdbdbd;
  font-weight: 500;
`;

const SliderValue = styled.span`
  color: #f5f5f5;
  font-size: 13px;
`;

const Slider = styled.input`
  appearance: none;
  grid-column: 1 / -1;
  width: 100%;
  height: 20px;
  background: linear-gradient(#424242, #424242) 0 50% / 100% 3px no-repeat;
  &::-webkit-slider-thumb {
    appearance: none;
    width: 20px;
    height: 20px;
    border-radius: 50%;
    background: #9e9e9e;
  }
`;

const SnapLabel = styled.label`
  display: flex;
  align-items: center;
  gap: 8px;
  height: 16px;
  margin: 9px 0 0 4px;
  color: #a5a5a5;
`;

const Keyboard = styled.div`
  height: 545px;
  overflow: hidden;
  background: #dcdce0;
`;

const Octave = styled.div`
  display: flex;
  align-items: flex-end;
  justify-content: flex-end;
  position: relative;
  height: 192px;
  padding-right: 2px;
  &:first-child { margin-top: -153px; }
  svg { position: absolute; left: 0; top: 0; }
`;

const KeyName = styled.span`
  position: relative;
  color: #3a3a3c;
  font-size: 11px;
  font-weight: 600;
`;

const Roll = styled.div`
  position: relative;
  overflow: hidden;
`;

const RollBand = styled.div`
  position: relative;
`;

const RollLabel = styled.span`
  position: absolute;
  left: 732px;
  top: 1px;
  color: #17692a;
  font-size: 11px;
  font-weight: 500;
`;

const D = '#222222';
const L = '#2d2d2d';
const pitchStripes = [D, L, L, D, L, D, L, D, L, L, D, L]
  .map((c, i) => `${c} ${i * 16}px ${i * 16 + 16}px`)
  .join(', ');

const RollGrid = styled.div`
  position: relative;
  height: 545px;
  overflow: hidden;
  background-image:
    linear-gradient(90deg, rgba(255, 255, 255, 0.13) 1px, transparent 1px),
    linear-gradient(90deg, rgba(255, 255, 255, 0.09) 1px, transparent 1px),
    linear-gradient(transparent 31px, #3d3d3d 31px 32px, transparent 32px),
    linear-gradient(${pitchStripes});
  background-size: 80px 100%, 20px 100%, 100% 192px, 100% 192px;
  background-position: 0 0, 0 0, 0 7px, 0 7px;
`;

const RollNote = styled.i`
  position: absolute;
  height: 17px;
  border: 1px solid #111;
  background: ${(p) => tones[p.$tone].bg};
  &::after {
    content: '';
    position: absolute;
    left: 3px;
    top: 6px;
    width: ${(p) => p.$line}px;
    height: 2px;
    background: ${(p) => tones[p.$tone].line};
  }
`;

const whiteLines = [27, 55, 82, 110, 137, 165, 192];
const blackKeys = [17, 49, 81, 129, 161];

function PianoRoll() {
  return (
    <Editor aria-label="Piano roll editor">
      <TabRow>
        <Tabs>
          <Tab $w={127} $active>Piano Roll</Tab>
          <Tab $w={128}>Score</Tab>
          <Tab $w={129}>Smart Tempo</Tab>
        </Tabs>
      </TabRow>
      <Toolbar $h={37} $pad={1}>
        <Menus />
        <Group $gap={9}><ToolButton aria-label="Collapse mode"><Icon name="collapse" w={16} h={16} box="0 0 18 18" /></ToolButton></Group>
        <Group $gap={9}><ToolButton aria-label="Automation"><Icon name="automation" w={18} h={18} /></ToolButton></Group>
        <Group $gap={9}>
          <ToolButton $w={32} aria-label="MIDI in"><Icon name="midiIn" w={21} h={18} /></ToolButton>
          <ToolButton $w={31} $tint="green" aria-label="MIDI out"><Icon name="midiOut" w={21} h={18} /></ToolButton>
        </Group>
        <Group $gap={9}><ToolButton $tint="blue" aria-label="Catch playhead"><Icon name="catchPlayhead" w={16} h={16} box="0 0 18 18" /></ToolButton></Group>
        <Group $gap={9}><ToolButton $tint="gold" aria-label="Link"><Icon name="link" w={18} h={18} /></ToolButton></Group>
        <Spacer $w={299} />
        <Group>
          <ToolButton $w={42} aria-label="Pointer tool"><Icon name="arrow" w={16} h={16} /><Chevron><Icon name="chevron" w={12} h={12} /></Chevron></ToolButton>
          <ToolButton $w={43} aria-label="Pencil tool"><Icon name="pencil" w={16} h={16} box="1 1 18 18" /><Chevron><Icon name="chevron" w={12} h={12} /></Chevron></ToolButton>
        </Group>
        <Trailing $bleed={30}>
          <Position>{'E4   33 3 3 1'}</Position>
          <ToolLabel>Snap:</ToolLabel>
          <Select label="Editor snap" value="Smart" w={163} />
        </Trailing>
      </Toolbar>
      <EditorBody>
        <EditorSide>
          <RegionHead>
            <Instrument kind="violin" />
            <RegionText>Hi Strings<RegionSub>on Track Hi Strings</RegionSub></RegionText>
            <Group><ToolButton aria-label="Region settings"><Icon name="inbox" w={17} h={14} box="0 0 20 17" /></ToolButton></Group>
          </RegionHead>
          <SideBody>
            <Settings>
              <Section $top={11} $bottom={17}>
                <SettingTitle>Time Quantize (classic)</SettingTitle>
                <SettingRow>
                  <Select label="Time quantize" value="1/16 Note" />
                  <Group><QButton>Q</QButton></Group>
                </SettingRow>
                <SliderField $gap={9}>
                  Strength<SliderValue>100</SliderValue>
                  <Slider type="range" min="0" max="100" defaultValue="100" />
                </SliderField>
                <SliderField $gap={9}>
                  Swing<SliderValue>50</SliderValue>
                  <Slider type="range" min="0" max="100" defaultValue="50" />
                </SliderField>
              </Section>
              <Section $top={11} $bottom={11}>
                <SettingTitle>Scale Quantize</SettingTitle>
                <SettingRow>
                  <Select label="Scale root" value="Off" w={50} />
                  <Select label="Scale" value="Major (lo..." />
                  <Group><QButton>Q</QButton></Group>
                </SettingRow>
                <SnapLabel><Check type="checkbox" $faint />Snap To Scale</SnapLabel>
              </Section>
              <Section $top={12} $bottom={0} $last>
                <SliderField>
                  Velocity<SliderValue>80</SliderValue>
                  <Slider type="range" min="0" max="127" defaultValue="80" />
                </SliderField>
              </Section>
            </Settings>
            <Keyboard>
              {['C5', 'C4', 'C3', 'C2'].map((name) => (
                <Octave key={name}>
                  <svg width="38" height="192" viewBox="0 0 38 192" aria-hidden="true">
                    {whiteLines.map((y) => <path key={y} d={`M0 ${y - 0.5}h38`} stroke="#4a4a4c" />)}
                    {blackKeys.map((y) => <rect key={y} y={y} width="18" height="14" fill="#1f1f1f" />)}
                  </svg>
                  {name !== 'C2' && <KeyName>{name}</KeyName>}
                </Octave>
              ))}
            </Keyboard>
          </SideBody>
        </EditorSide>
        <Roll>
          <Ruler $h={23} $offset={0}>
            {Array.from({ length: 14 }, (_, k) => <RulerBar key={k}>{28 + k}</RulerBar>)}
          </Ruler>
          <RollBand>
            <TickRow $h={21} $offset={0} $bg="#bdffc8">
              {Array.from({ length: 56 }, (_, k) => <Tick key={k} $full={k % 4 === 0} $color="#86c592" />)}
            </TickRow>
            <RollLabel>Hi Strings</RollLabel>
          </RollBand>
          <RollGrid>
            {Object.entries(rollNotes).flatMap(([pitch, list]) =>
              list.map(([x, w, tone]) => (
                <RollNote
                  key={`${pitch}-${x}`}
                  $tone={tone}
                  $line={Math.max(2, Math.min(w - 6, Math.round((w - 3) * tones[tone].v)))}
                  style={{ left: x, width: w, top: 23 + (72 - pitch) * 16 - 1 }}
                />
              )),
            )}
          </RollGrid>
          <Playhead $x={639} $top={23} $grip={19}><Grip w={19} fill="#f2fff4" stroke="#b0c8b4" /></Playhead>
        </Roll>
      </EditorBody>
    </Editor>
  );
}

export default function App() {
  return (
    <Page>
      <GlobalStyle />
      <WindowTop />
      <Body>
        <InspectorColumn />
        <Main>
          <TracksView />
          <PianoRoll />
        </Main>
      </Body>
    </Page>
  );
}
